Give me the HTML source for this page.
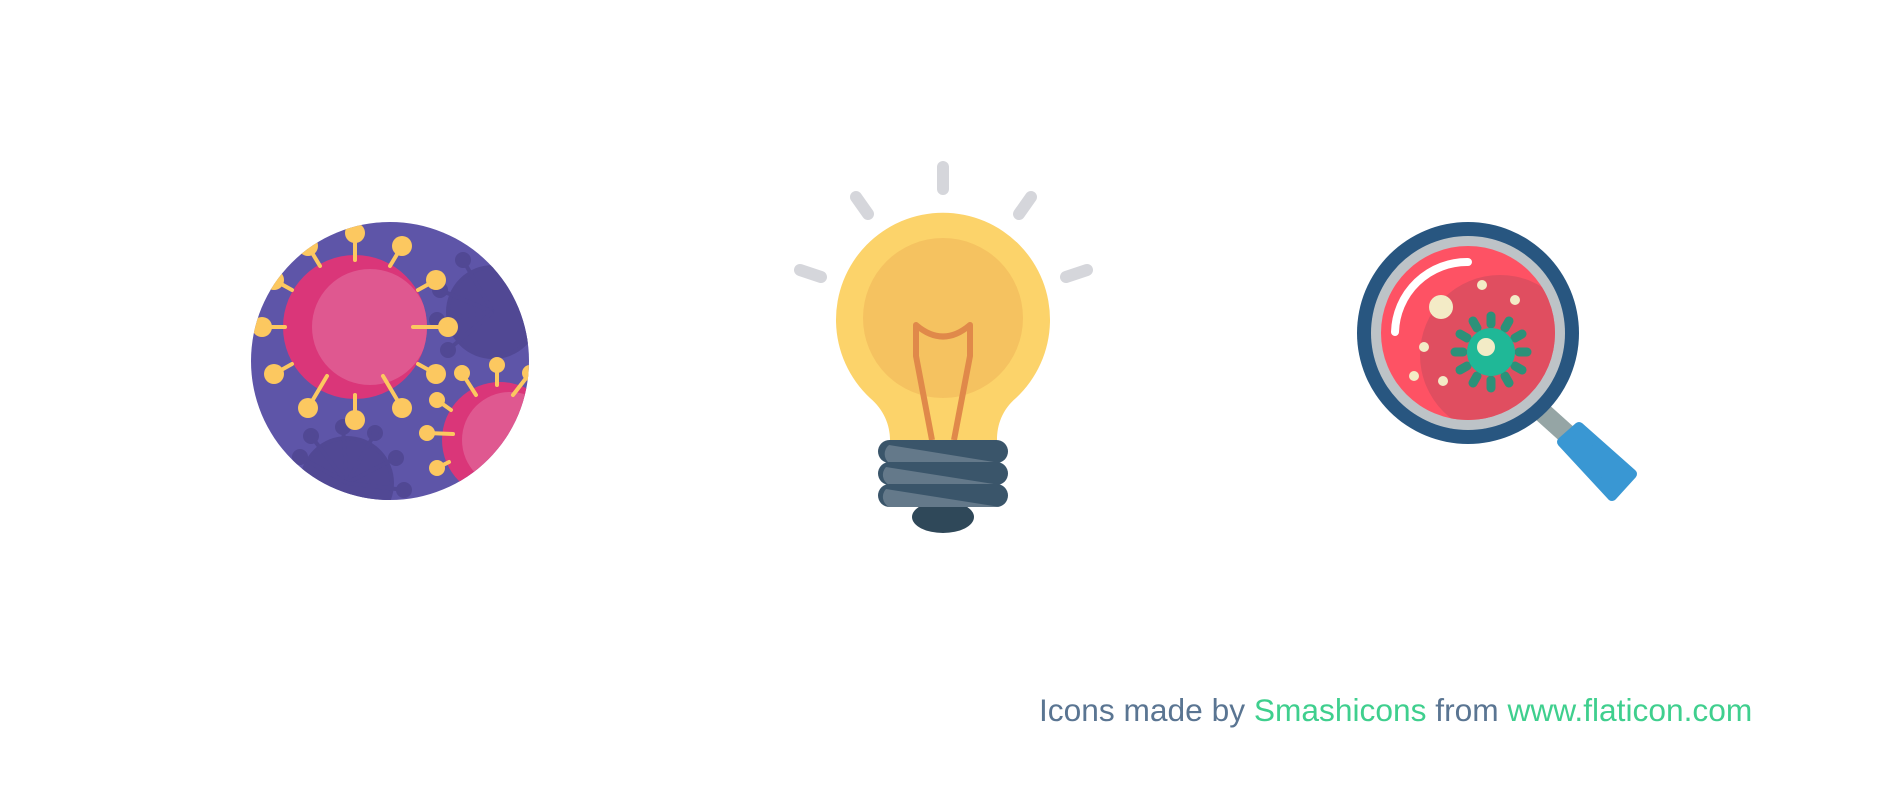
<!DOCTYPE html>
<html><head><meta charset="utf-8"><style>
html,body{margin:0;padding:0;background:#fff;width:1882px;height:786px;overflow:hidden;}
svg{position:absolute;left:0;top:0;}
.credit{position:absolute;left:1039px;top:690px;font-family:"Liberation Sans",Arial,sans-serif;font-size:31.7px;color:#5a7592;white-space:nowrap;line-height:40px;}
.g{color:#3fcf8e;}
</style></head><body>
<svg width="1882" height="786" viewBox="0 0 1882 786">
<defs>
<clipPath id="vc"><circle cx="390" cy="361" r="139"/></clipPath>
<clipPath id="pk"><circle cx="355" cy="327" r="72"/></clipPath>
<clipPath id="pk2"><circle cx="500" cy="440" r="58"/></clipPath>
<clipPath id="lens"><circle cx="1468" cy="333" r="87"/></clipPath>
</defs>
<!-- virus -->
<circle cx="390" cy="361" r="139" fill="#5e55a8"/>
<g clip-path="url(#vc)">
 <g fill="#514894" stroke="#514894" stroke-width="4">
  <circle cx="493" cy="312" r="45"/>
  <circle cx="347" cy="483" r="45"/>
  <line x1="347" y1="483" x2="311" y2="436"/><circle cx="311" cy="436" r="6"/>
  <line x1="347" y1="483" x2="343" y2="427"/><circle cx="343" cy="427" r="6"/>
  <line x1="347" y1="483" x2="375" y2="433"/><circle cx="375" cy="433" r="6"/>
  <line x1="347" y1="483" x2="396" y2="458"/><circle cx="396" cy="458" r="6"/>
  <line x1="347" y1="483" x2="404" y2="490"/><circle cx="404" cy="490" r="6"/>
  <line x1="347" y1="483" x2="300" y2="457"/><circle cx="300" cy="457" r="6"/>
  <line x1="493" y1="312" x2="463" y2="260"/><circle cx="463" cy="260" r="6"/>
  <line x1="493" y1="312" x2="440" y2="290"/><circle cx="440" cy="290" r="6"/>
  <line x1="493" y1="312" x2="437" y2="320"/><circle cx="437" cy="320" r="6"/>
  <line x1="493" y1="312" x2="448" y2="350"/><circle cx="448" cy="350" r="6"/>
 </g>
 <circle cx="355" cy="327" r="72" fill="#da3679"/>
 <circle cx="370" cy="327" r="58" fill="#df5890" clip-path="url(#pk)"/>
 <circle cx="500" cy="440" r="58" fill="#da3679"/>
 <circle cx="510" cy="440" r="48" fill="#df5890" clip-path="url(#pk2)"/>
 <g stroke="#fcc860" stroke-width="4" stroke-linecap="round">
  <line x1="355" y1="260" x2="355" y2="233"/><line x1="320" y1="266" x2="308" y2="246"/><line x1="390" y1="266" x2="402" y2="246"/>
  <line x1="292" y1="290" x2="274" y2="280"/><line x1="418" y1="290" x2="436" y2="280"/><line x1="285" y1="327" x2="262" y2="327"/>
  <line x1="413" y1="327" x2="448" y2="327"/><line x1="292" y1="364" x2="274" y2="374"/><line x1="418" y1="364" x2="436" y2="374"/>
  <line x1="327" y1="376" x2="308" y2="408"/><line x1="383" y1="376" x2="402" y2="408"/><line x1="355" y1="395" x2="355" y2="420"/>
  <line x1="476" y1="395" x2="462" y2="373"/><line x1="497" y1="385" x2="497" y2="365"/><line x1="513" y1="395" x2="530" y2="373"/>
  <line x1="453" y1="434" x2="427" y2="433"/><line x1="451" y1="410" x2="437" y2="400"/><line x1="449" y1="462" x2="437" y2="468"/>
 </g>
 <g fill="#fcc860">
  <circle cx="355" cy="233" r="10"/><circle cx="308" cy="246" r="10"/><circle cx="402" cy="246" r="10"/>
  <circle cx="274" cy="280" r="10"/><circle cx="436" cy="280" r="10"/><circle cx="262" cy="327" r="10"/>
  <circle cx="448" cy="327" r="10"/><circle cx="274" cy="374" r="10"/><circle cx="436" cy="374" r="10"/>
  <circle cx="308" cy="408" r="10"/><circle cx="402" cy="408" r="10"/><circle cx="355" cy="420" r="10"/>
  <circle cx="462" cy="373" r="8"/><circle cx="497" cy="365" r="8"/><circle cx="437" cy="400" r="8"/>
  <circle cx="427" cy="433" r="8"/><circle cx="437" cy="468" r="8"/><circle cx="530" cy="373" r="8"/>
 </g>
</g>
<!-- bulb rays -->
<g stroke="#d5d6db" stroke-width="12" stroke-linecap="round">
 <line x1="943" y1="167" x2="943" y2="189"/>
 <line x1="856" y1="197" x2="868" y2="214"/>
 <line x1="1031" y1="197" x2="1019" y2="214"/>
 <line x1="800" y1="270" x2="821" y2="277"/>
 <line x1="1087" y1="270" x2="1066" y2="277"/>
</g>
<!-- bulb -->
<path d="M890 440 C890 425 884 410 870 398 A107 107 0 1 1 1016 398 C1002 410 997 425 997 440 Z" fill="#fcd36a"/>
<circle cx="943" cy="318" r="80" fill="#f5c260"/>
<path d="M932 440 L916 356 L916 325 Q943 348 970 325 L970 356 L954 440" fill="none" stroke="#e0894a" stroke-width="6" stroke-linejoin="round"/>
<ellipse cx="943" cy="517" rx="31" ry="16" fill="#2f4859"/>
<g>
 <rect x="878" y="440" width="130" height="23" rx="11.5" fill="#3a556a"/>
 <path d="M889 445 L1000 463 L889 463 A11.5 11.5 0 0 1 889 445Z" fill="#64798a"/>
 <rect x="878" y="462" width="130" height="23" rx="11.5" fill="#3a556a"/>
 <path d="M886 467 L1000 485 L889 485 A11.5 11.5 0 0 1 886 467Z" fill="#64798a"/>
 <rect x="878" y="484" width="130" height="23" rx="11.5" fill="#3a556a"/>
 <path d="M886 489 L1000 507 L889 507 A11.5 11.5 0 0 1 886 489Z" fill="#64798a"/>
</g>
<!-- magnifier -->
<line x1="1540" y1="410" x2="1570" y2="437" stroke="#95a5a5" stroke-width="20"/>
<polygon points="1562,442 1579,427 1632,474 1612,496" fill="#3997d3" stroke="#3997d3" stroke-width="10" stroke-linejoin="round"/>
<circle cx="1468" cy="333" r="111" fill="#285680"/>
<circle cx="1468" cy="333" r="97" fill="#bdc3c7"/>
<circle cx="1468" cy="333" r="87" fill="#fe5264"/>
<circle cx="1500" cy="355" r="80" fill="#e04e60" clip-path="url(#lens)"/>
<path d="M1395 332 A72 72 0 0 1 1468 262" fill="none" stroke="#fff" stroke-width="8" stroke-linecap="round"/>
<g fill="#f3ebc6">
 <circle cx="1441" cy="307" r="12"/><circle cx="1482" cy="285" r="5"/><circle cx="1515" cy="300" r="5"/>
 <circle cx="1424" cy="347" r="5"/><circle cx="1414" cy="376" r="5"/><circle cx="1443" cy="381" r="5"/>
</g>
<g stroke="#2c9179" stroke-width="9" stroke-linecap="round" transform="translate(1491,352)">
 <line x1="0" y1="-28" x2="0" y2="-36"/><line x1="0" y1="28" x2="0" y2="36"/>
 <line x1="-28" y1="0" x2="-36" y2="0"/><line x1="28" y1="0" x2="36" y2="0"/>
 <line x1="14" y1="-24" x2="18" y2="-31"/><line x1="-14" y1="-24" x2="-18" y2="-31"/>
 <line x1="14" y1="24" x2="18" y2="31"/><line x1="-14" y1="24" x2="-18" y2="31"/>
 <line x1="24" y1="-14" x2="31" y2="-18"/><line x1="-24" y1="-14" x2="-31" y2="-18"/>
 <line x1="24" y1="14" x2="31" y2="18"/><line x1="-24" y1="14" x2="-31" y2="18"/>
</g>
<circle cx="1491" cy="352" r="24" fill="#1fb897"/>
<circle cx="1486" cy="347" r="9" fill="#f3ebc6"/>
</svg>
<div class="credit">Icons made by <span class="g">Smashicons</span> from <span class="g">www.flaticon.com</span></div>
</body></html>
